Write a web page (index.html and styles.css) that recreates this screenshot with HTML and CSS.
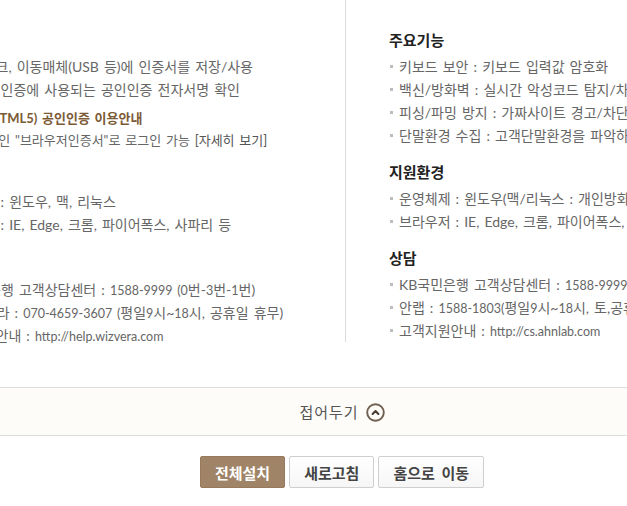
FILE: index.html
```html
<!DOCTYPE html>
<html lang="ko">
<head>
<meta charset="utf-8">
<title>보안프로그램 설치</title>
<link rel="stylesheet" href="styles.css">
</head>
<body>
<div class="page">
  <div class="columns">
    <div class="col col-left">
      <div class="section">
        <h3 class="sec-title">주요기능</h3>
        <ul class="list">
          <li>하드디스크, 이동매체(USB 등)에 인증서를 저장/사용</li>
          <li>전자서명 인증에 사용되는 공인인증 전자서명 확인</li>
        </ul>
        <div class="notice">
          <p class="notice-title">브라우저(HTML5) 공인인증 이용안내</p>
          <p class="notice-text">프로그램 설치없이 개인 "브라우저인증서"로 로그인 가능 <a class="more" href="#">[자세히 보기]</a></p>
        </div>
      </div>
      <div class="section sec-env-left">
        <h3 class="sec-title">지원환경</h3>
        <ul class="list">
          <li>운영체제 : 윈도우, 맥, 리눅스</li>
          <li>브라우저 : IE, Edge, 크롬, 파이어폭스, 사파리 등</li>
        </ul>
      </div>
      <div class="section sec-cs-left">
        <h3 class="sec-title">상담</h3>
        <ul class="list">
          <li>KB국민은행 고객상담센터 : <span class="en">1588-9999 (0</span>번-<span class="en">3</span>번-<span class="en">1</span>번)</li>
          <li>㈜위즈베라 : <span class="en">070-4659-3607 (</span>평일<span class="en">9</span>시~<span class="en">18</span>시, 공휴일 휴무)</li>
          <li>고객지원안내 : <span class="en">http://help.wizvera.com</span></li>
        </ul>
      </div>
    </div>
    <div class="col col-right">
      <div class="section">
        <h3 class="sec-title">주요기능</h3>
        <ul class="list">
          <li>키보드 보안 : 키보드 입력값 암호화</li>
          <li>백신/방화벽 : 실시간 악성코드 탐지/차단</li>
          <li>피싱/파밍 방지 : 가짜사이트 경고/차단</li>
          <li>단말환경 수집 : 고객단말환경을 파악하여 이상거래 탐지</li>
        </ul>
      </div>
      <div class="section">
        <h3 class="sec-title">지원환경</h3>
        <ul class="list">
          <li>운영체제 : 윈도우(맥/리눅스 : 개인방화벽 미지원)</li>
          <li>브라우저 : IE, Edge, 크롬, 파이어폭스, 사파리 등</li>
        </ul>
      </div>
      <div class="section">
        <h3 class="sec-title">상담</h3>
        <ul class="list">
          <li>KB국민은행 고객상담센터 : <span class="en">1588-9999 (0</span>번-<span class="en">3</span>번-<span class="en">1</span>번)</li>
          <li>안랩 : <span class="en">1588-1803(</span>평일<span class="en">9</span>시~<span class="en">18</span>시, 토,공휴일 휴무)</li>
          <li>고객지원안내 : <span class="en">http://cs.ahnlab.com</span></li>
        </ul>
      </div>
    </div>
  </div>

  <div class="fold-bar">
    <button class="fold-btn" type="button">
      <span class="fold-label">접어두기</span>
      <svg class="fold-icon" width="19" height="19" viewBox="0 0 19 19" aria-hidden="true">
        <circle cx="9.5" cy="9.5" r="8.3" fill="none" stroke="#6f5f50" stroke-width="1.9"/>
        <polyline points="6.6,11 9.5,8.1 12.4,11" fill="none" stroke="#4a3c30" stroke-width="2.1" stroke-linecap="round" stroke-linejoin="round"/>
      </svg>
    </button>
  </div>

  <div class="actions">
    <button class="btn btn-primary" type="button">전체설치</button>
    <button class="btn" type="button">새로고침</button>
    <button class="btn" type="button">홈으로 이동</button>
  </div>
</div>
</body>
</html>
```

FILE: styles.css
```css
html, body {
  margin: 0;
  padding: 0;
  background: #fff;
  overflow: hidden;
}
body {
  width: 627px;
  height: 506px;
  font-family: Lato, "Noto Sans CJK KR", "Noto Sans", sans-serif;
  color: #666;
  font-size: 14px;
  word-spacing: 1.5px;
}
.en {
  font-size: 12.5px;
  line-height: 1;
}
.page {
  width: 920px;
  margin-left: -118px;
}
.columns {
  display: grid;
  grid-template-columns: 464px 456px;
  align-items: start;
}
.col {
  padding-top: 30px;
  box-sizing: border-box;
}
.col-left {
  padding-left: 52px;
}
.col-right {
  padding-left: 43px;
  margin-left: -1px;
  border-left: 1px solid #dcdcdc;
}
.section + .section {
  margin-top: 15px;
}
.sec-title {
  margin: 0 0 5px;
  font-size: 15px;
  line-height: 20px;
  font-weight: 700;
  color: #222;
  white-space: nowrap;
}
.list {
  list-style: none;
  margin: 0;
  padding: 0;
}
.list li {
  position: relative;
  padding-left: 10px;
  line-height: 23px;
  height: 23px;
  white-space: nowrap;
}
.list li::before {
  content: "";
  position: absolute;
  left: 1px;
  top: 10px;
  width: 3px;
  height: 3px;
  background: #bdbdbd;
}
.notice {
  margin-top: 6px;
  font-size: 13px;
}
.notice p {
  margin: 0;
  line-height: 22px;
  white-space: nowrap;
}
.notice-title {
  font-weight: 700;
  color: #7b5a36;
  margin-left: 4px !important;
}
.notice-text {
  margin-left: -53px !important;
}
.more {
  color: #555;
  text-decoration: none;
}
.sec-env-left {
  margin-top: 14px !important;
}
.sec-cs-left {
  margin-top: 17px !important;
}
.fold-bar {
  margin-top: 40px;
  border-top: 1px solid #dedede;
  border-bottom: 1px solid #dedede;
  background: #fdfcf8;
  height: 47px;
  display: flex;
  align-items: center;
  justify-content: center;
}
.fold-btn {
  display: flex;
  align-items: center;
  gap: 7px;
  background: none;
  border: 0;
  padding: 0;
  font-family: inherit;
  font-size: 15px;
  letter-spacing: 1px;
  color: #555;
  cursor: pointer;
}
.fold-label {
  line-height: 20px;
}
.fold-icon {
  display: block;
  margin-top: 1px;
}
.actions {
  margin-top: 20px;
  display: flex;
  justify-content: center;
  gap: 4px;
}
.btn {
  height: 32px;
  padding: 0 14px;
  border: 1px solid #cfcfcf;
  border-radius: 2px;
  background: linear-gradient(#ffffff, #f6f6f6);
  font-family: inherit;
  font-size: 15px;
  font-weight: 700;
  word-spacing: 3px;
  color: #444;
  box-sizing: border-box;
}
.btn-primary {
  background: #a08468;
  border-color: #98795c;
  color: #fff;
}
```
